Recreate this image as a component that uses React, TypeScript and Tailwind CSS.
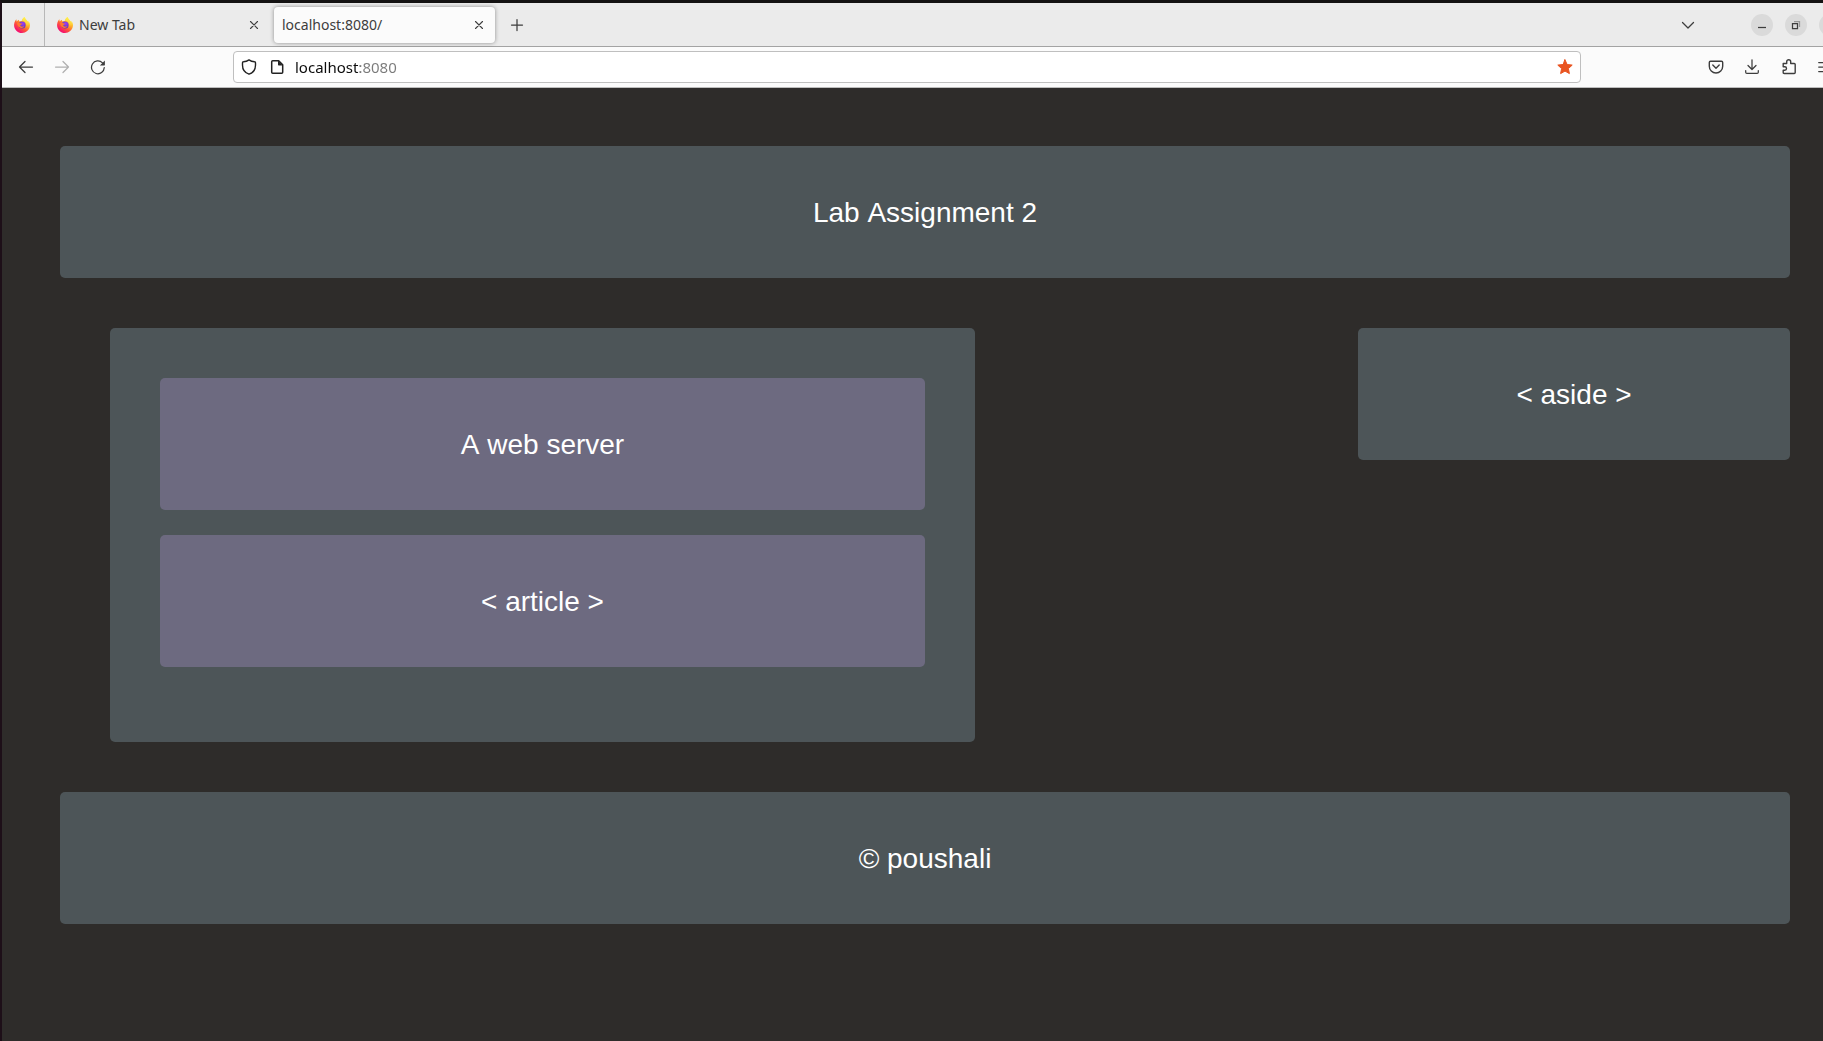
import type { ReactNode } from "react";

function FirefoxLogo({ id }: { id: string }) {
  return (
    <svg viewBox="0 0 16 16" className="size-4 shrink-0" aria-hidden="true">
      <defs>
        <linearGradient id={`${id}-body`} x1="0.85" y1="0.1" x2="0.2" y2="0.95">
          <stop offset="0.05" stopColor="#fff44f" />
          <stop offset="0.35" stopColor="#ffa72a" />
          <stop offset="0.6" stopColor="#ff5a36" />
          <stop offset="0.9" stopColor="#f5156c" />
        </linearGradient>
        <linearGradient id={`${id}-flame`} x1="0.6" y1="0" x2="0.5" y2="1">
          <stop offset="0" stopColor="#fff44f" />
          <stop offset="0.6" stopColor="#ffd23a" />
          <stop offset="1" stopColor="#ff980e" stopOpacity="0" />
        </linearGradient>
        <radialGradient id={`${id}-globe`} cx="0.6" cy="0.3" r="0.75">
          <stop offset="0" stopColor="#a03cf5" />
          <stop offset="1" stopColor="#5136b8" />
        </radialGradient>
      </defs>
      <path
        d="M15.6 6.1c-.3-.9-1-1.7-1.6-2 .4.9.6 1.600.7 2.100C13.800 4 12.300 3.100 11.100 1.200 10.900.9 10.800.5 10.700 0 9 .9 8.100 2.700 8 3.700c-.9.1-1.700.3-2.300.8C5 4.200 4.800 3.400 4.900 2.800 4 3.200 3.300 3.900 2.800 4.500c-.4-.5-.3-1.900-.3-2.200C1.500 3 .3 5.200.1 7.500-.3 12.100 3.400 16 8 16c4 0 7.300-2.900 7.900-6.700.2-1.100.100-2.200-.3-3.200Z"
        fill={`url(#${id}-body)`}
      />
      <circle cx="8.100" cy="8" r="3.500" fill={`url(#${id}-globe)`} />
      <path
        d="M3 6.100c1.200-.8 2.400-.4 3.200.1.600.3 1.500.2 2 .4-.1.900-1.200 1.100-1.800 1.500-.4.500.1 1.200.9 1.500 1.300.4 2-.5 3-.3-.6 1.200-2 1.900-3.400 1.600C4.700 10.500 3.300 8.700 3 6.100Z"
        fill="#ff7a2d"
      />
      <path
        d="M10.700 0C9 .9 8.100 2.700 8 3.700c2.300-.1 4.100 1.600 4.200 3.800.1 1.900-.6 3-1.400 3.900 2.700-.6 4.200-2.800 3.900-5.200C13.800 4 12.300 3.100 11.100 1.200 10.900.9 10.800.5 10.700 0Z"
        fill={`url(#${id}-flame)`}
      />
    </svg>
  );
}

function Icon({ children, className = "" }: { children: ReactNode; className?: string }) {
  return (
    <svg
      viewBox="0 0 16 16"
      fill="none"
      stroke="currentColor"
      strokeWidth="1.25"
      strokeLinecap="round"
      strokeLinejoin="round"
      className={`size-4 shrink-0 ${className}`}
      aria-hidden="true"
    >
      {children}
    </svg>
  );
}

function ToolButton({
  label,
  children,
  className = "w-9",
  disabled = false,
}: {
  label: string;
  children: ReactNode;
  className?: string;
  disabled?: boolean;
}) {
  return (
    <button
      type="button"
      aria-label={label}
      disabled={disabled}
      className={`flex h-8 shrink-0 items-center justify-center text-[#3d3d3d] disabled:text-[#b0b0b0] ${className}`}
    >
      <Icon>{children}</Icon>
    </button>
  );
}

function CloseTab() {
  return (
    <button type="button" aria-label="Close tab" className="flex size-6 items-center justify-center text-[#3d3d3d]">
      <Icon>
        <path strokeWidth="1.1" d="m4.500 4.500 7 7M11.500 4.500l-7 7" />
      </Icon>
    </button>
  );
}

function WindowButton({ label, children }: { label: string; children: ReactNode }) {
  return (
    <button
      type="button"
      aria-label={label}
      className="flex size-[22px] shrink-0 items-center justify-center rounded-full bg-[#dadada] text-[#3d3d3d]"
    >
      <Icon>{children}</Icon>
    </button>
  );
}

function TabBar() {
  return (
    <div className="-mr-[22px] flex h-11 items-center border-b border-[#a3a3a3] bg-[#ebebeb] pr-1 text-sm text-[#3d3d3d]">
      <button type="button" aria-label="Firefox View" className="flex h-full w-[43px] items-center border-r border-[#b8b8b8] pl-3">
        <FirefoxLogo id="view" />
      </button>
      <div className="flex h-full w-[229px] items-center pr-2 pl-3">
        <button type="button" className="flex flex-1 items-center gap-1.5">
          <FirefoxLogo id="tab" />
          New Tab
        </button>
        <CloseTab />
      </div>
      <div className="flex h-9 w-[221px] items-center rounded bg-[#fbfbfb] pr-1 pl-2 shadow-[0_0_4px_rgba(0,0,0,0.4)]">
        <button type="button" className="flex-1 text-left">
          localhost:8080/
        </button>
        <CloseTab />
      </div>
      <ToolButton label="New tab" className="ml-1 w-9">
        <path d="M8 2.500v11M2.500 8h11" />
      </ToolButton>
      <ToolButton label="List all tabs" className="ml-auto w-9">
        <path d="m2.500 5.500 5.500 5.500 5.500-5.500" />
      </ToolButton>
      <div className="ml-[45px] flex gap-3">
        <WindowButton label="Minimize">
          <path strokeLinecap="butt" d="M4 10.500h8" />
        </WindowButton>
        <WindowButton label="Restore">
          <path strokeLinejoin="miter" d="M4.500 6.500h5v5h-5z" />
          <path stroke="#969696" strokeLinecap="butt" strokeLinejoin="miter" d="M6 4.500h5.500V10" />
        </WindowButton>
        <WindowButton label="Close">
          <path d="m4.500 4.500 7 7M11.500 4.500l-7 7" />
        </WindowButton>
      </div>
    </div>
  );
}

function Toolbar() {
  return (
    <div className="-mr-[22px] flex h-[41px] items-center border-b border-[#bdbdbd] bg-[#fbfbfb] pr-px pl-1.5">
      <ToolButton label="Back">
        <path d="M14.500 8h-13M7 2.500 1.500 8 7 13.500" />
      </ToolButton>
      <ToolButton label="Forward" disabled>
        <path d="M1.500 8h13M9 2.500 14.500 8 9 13.500" />
      </ToolButton>
      <ToolButton label="Reload">
        <path d="M14.300 8.600A6.400 6.400 0 1 1 12.500 3.900" />
        <path fill="currentColor" stroke="none" d="M14.900 1.600v4.500c0 .3-.2.500-.5.500H9.900z" />
      </ToolButton>
      <div className="mx-[117px] flex h-8 flex-1 items-center rounded border border-[#bfbfbf] bg-white pl-[7px] text-[#222]">
        <Icon>
          <path
            strokeWidth="1.4"
            d="M8 .9c1.500 1.100 3.700 1.800 5.600 1.900.6 0 .9.400.9.900v2.600C14.500 10.600 12 13.900 8 15.200 4 13.900 1.500 10.600 1.500 6.300V3.700c0-.5.300-.9.900-.9C4.300 2.700 6.500 2 8 .9Z"
          />
        </Icon>
        <Icon className="ml-3">
          <path strokeWidth="1.500" d="M3.700 1.700h6l4 4v7.600c0 .6-.4 1-1 1h-9c-.6 0-1-.4-1-1V2.700c0-.6.400-1 1-1Z" />
          <path fill="currentColor" stroke="none" d="M9 1.500 13.900 6.600H10c-.6 0-1-.4-1-1z" />
        </Icon>
        <input
          type="text"
          aria-label="Address"
          defaultValue="localhost:8080"
          className="ml-2.5 flex-1 bg-[linear-gradient(to_right,#0c0c0c_65px,#7a7a7a_65px)] bg-clip-text text-[15px] text-transparent caret-black outline-none"
        />
        <button type="button" aria-label="Edit bookmark" className="mr-[7px] text-[#e95420]">
          <Icon>
            <path
              fill="currentColor"
              strokeWidth="1"
              d="m8 .8 2.100 4.700 5.100.6-3.800 3.500 1 5L8 12.100l-4.400 2.500 1-5L.8 6.100l5.100-.6z"
            />
          </Icon>
        </button>
      </div>
      <ToolButton label="Save to Pocket">
        <path
          strokeWidth="1.400"
          d="M2.500 2.200h11c.7 0 1.200.5 1.200 1.200v3.900a6.700 6.700 0 0 1-13.400 0V3.400c0-.7.500-1.200 1.200-1.200Z"
        />
        <path strokeWidth="1.400" d="M4.800 6.100 8 9.200l3.200-3.100" />
      </ToolButton>
      <ToolButton label="Downloads">
        <path d="M8 .800v9.500M4 6.500l4 4 4-4M1.700 11.500v1.700c0 .7.500 1.200 1.200 1.200h10.200c.7 0 1.200-.5 1.200-1.200v-1.700" />
      </ToolButton>
      <ToolButton label="Extensions" className="w-[37px]">
        <path
          strokeWidth="1.400"
          d="M2.200 4.500h3.500V2.700a2 2 0 0 1 4 0v1.800h3.500c.6 0 1 .4 1 1v8c0 .6-.4 1-1 1H3.200c-.6 0-1-.4-1-1v-2.300h1.600a1.600 1.600 0 0 0 0-3.400H2.200Z"
        />
      </ToolButton>
      <ToolButton label="Menu" className="w-[37px]">
        <path d="M.700 3.500h14.600M.700 8h14.600M.700 12.500h14.600" />
      </ToolButton>
    </div>
  );
}

const slate = "rounded-[5px] bg-[#4d5558]";
const label = "px-[50px] pt-[51px] pb-[49px] text-center text-[28px] leading-8 text-white";

export default function App() {
  return (
    <div className="flex min-h-screen flex-col overflow-x-clip border-t-3 border-l-2 border-t-[#141212] border-l-[#1d0f18] bg-[#2e2c2a] font-['Noto_Sans',sans-serif]">
      <TabBar />
      <Toolbar />
      <div className="flex flex-1 flex-col gap-[50px] pt-[58px] pr-[33px] pb-[58px] pl-[58px] font-['Liberation_Sans',Arial,sans-serif] [font-kerning:none]">
        <header className={slate}>
          <h1 className={label}>Lab Assignment 2</h1>
        </header>
        <main className="flex items-start justify-between pl-[50px]">
          <section className={`flex w-[865px] flex-col gap-[25px] px-[50px] pt-[50px] pb-[75px] ${slate}`}>
            <header className="rounded-[5px] bg-[#6d6a80]">
              <h2 className={label}>A web server</h2>
            </header>
            <article className="rounded-[5px] bg-[#6d6a80]">
              <p className={label}>&lt; article &gt;</p>
            </article>
          </section>
          <aside className={`w-[432px] ${slate}`}>
            <p className={label}>&lt; aside &gt;</p>
          </aside>
        </main>
        <footer className={slate}>
          <p className={label}>© poushali</p>
        </footer>
      </div>
    </div>
  );
}
